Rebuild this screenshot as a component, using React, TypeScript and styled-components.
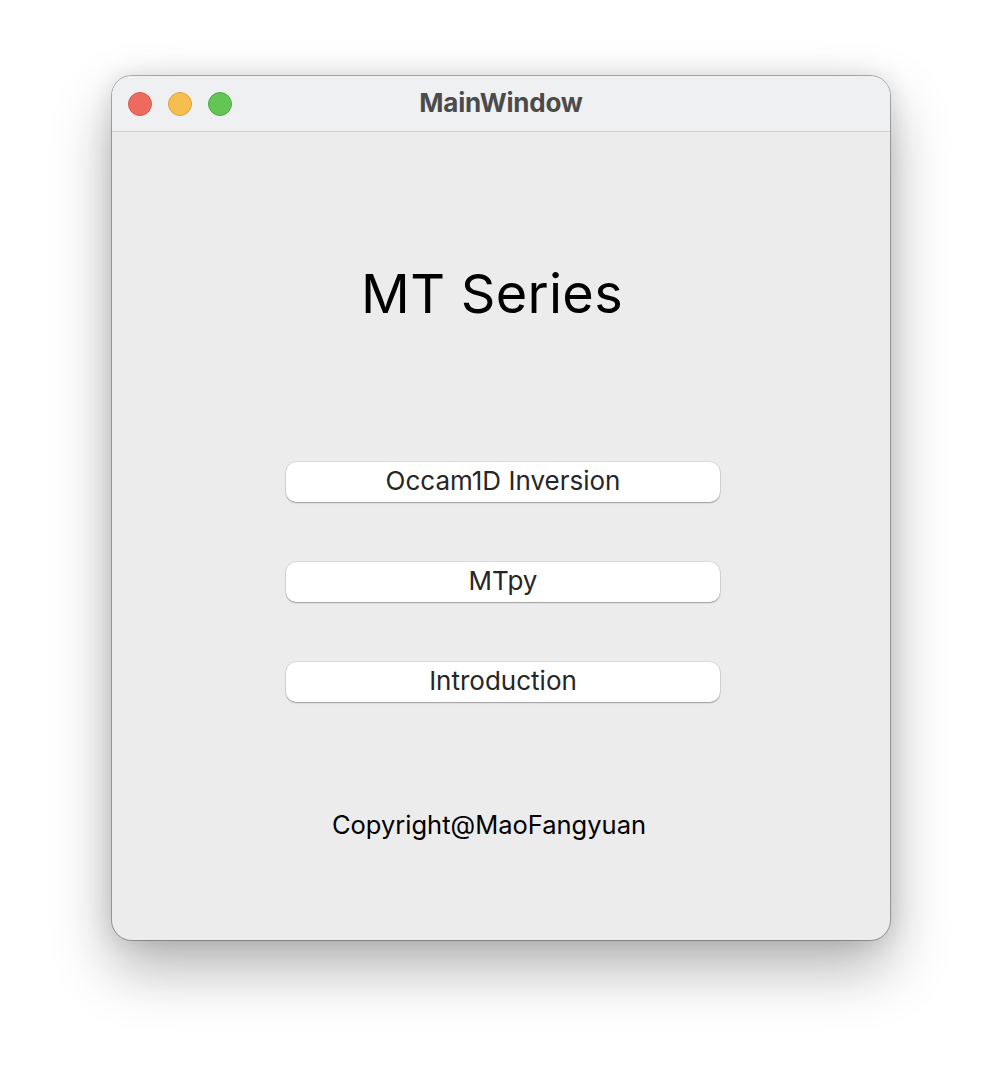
import React from "react";
import styled, { createGlobalStyle } from "styled-components";

const Global = createGlobalStyle`
  html, body { margin: 0; padding: 0; background: #ffffff; }
  body { font-family: Inter, "Noto Sans", "Liberation Sans", sans-serif; }
`;

const Page = styled.div`
  width: 1002px;
  height: 1088px;
  display: flex;
  justify-content: center;
  align-items: flex-start;
  padding-top: 76px;
  box-sizing: border-box;
  background: #ffffff;
`;

const Window = styled.div`
  width: 778px;
  height: 864px;
  border-radius: 20px;
  overflow: hidden;
  display: flex;
  flex-direction: column;
  background: #ececec;
  box-shadow: 0 0 0 1px rgba(0, 0, 0, 0.28), 0 28px 60px rgba(0, 0, 0, 0.3),
    0 0 24px rgba(0, 0, 0, 0.12);
`;

const TitleBar = styled.div`
  height: 56px;
  flex: 0 0 56px;
  box-sizing: border-box;
  border-bottom: 1px solid #d2d2d2;
  background: #eff0f1;
  display: grid;
  grid-template-columns: 1fr auto 1fr;
  align-items: center;
  padding: 0 16px;
`;

const Lights = styled.div`
  display: flex;
  gap: 16px;
  align-items: center;
  padding-top: 1px;
`;

const Light = styled.span<{ $fill: string; $edge: string }>`
  width: 24px;
  height: 24px;
  border-radius: 50%;
  box-sizing: border-box;
  background: ${(p) => p.$fill};
  border: 1px solid ${(p) => p.$edge};
`;

const WindowTitle = styled.div`
  font-weight: 700;
  font-size: 26px;
  color: #4b4b4b;
  letter-spacing: -0.2px;
  padding-bottom: 2px;
`;

const Content = styled.div`
  flex: 1;
  display: flex;
  flex-direction: column;
  align-items: center;
`;

const Heading = styled.h1`
  margin: 132px 18px 0 0;
  font-size: 54px;
  line-height: 60px;
  font-weight: 400;
  color: #000;
  letter-spacing: 0.3px;
`;

const Buttons = styled.div`
  margin: 138px 0 0 4px;
  display: flex;
  flex-direction: column;
  gap: 60px;
`;

const Button = styled.button`
  width: 434px;
  height: 40px;
  border: none;
  border-radius: 10px;
  background: #ffffff;
  box-shadow: 0 1px 1.5px rgba(0, 0, 0, 0.3), 0 0 0 0.5px rgba(0, 0, 0, 0.12);
  font-family: Inter, "Noto Sans", sans-serif;
  font-size: 26px;
  color: #262626;
  padding: 0 0 3px;
  cursor: default;
`;

const Copyright = styled.div`
  margin: 107px 24px 0 0;
  font-size: 25.5px;
  line-height: 32px;
  color: #000;
`;

export default function App() {
  return (
    <>
      <Global />
      <Page>
        <Window>
          <TitleBar>
            <Lights>
              <Light $fill="#ee6a5f" $edge="#d6574d" />
              <Light $fill="#f5be4f" $edge="#d9a440" />
              <Light $fill="#62c554" $edge="#52a945" />
            </Lights>
            <WindowTitle>MainWindow</WindowTitle>
            <div />
          </TitleBar>
          <Content>
            <Heading>MT Series</Heading>
            <Buttons>
              <Button>Occam1D Inversion</Button>
              <Button>MTpy</Button>
              <Button>Introduction</Button>
            </Buttons>
            <Copyright>Copyright@MaoFangyuan</Copyright>
          </Content>
        </Window>
      </Page>
    </>
  );
}
